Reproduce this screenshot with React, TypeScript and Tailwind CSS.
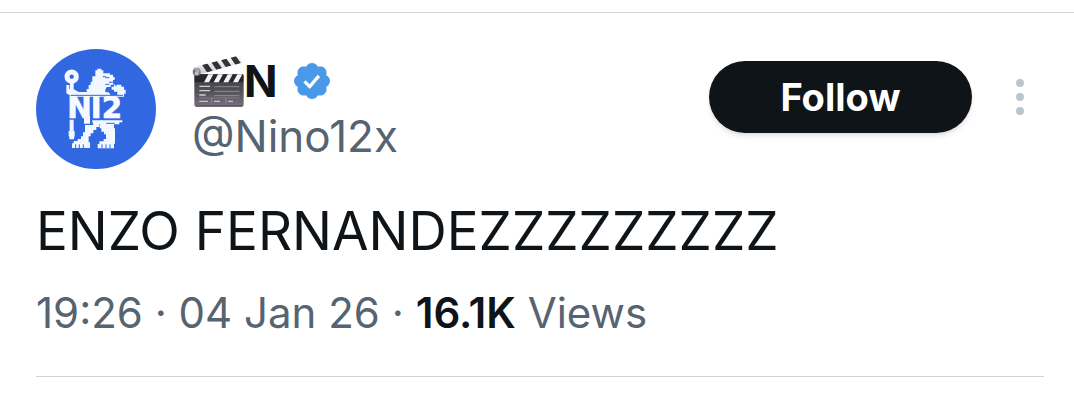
function Avatar() {
  return (
    <svg viewBox="18 18 360 360" className="size-full" role="img" aria-label="N avatar">
      <rect x="18" y="18" width="360" height="360" fill="#3168e2" />
      {/* staff */}
      <circle cx="125" cy="101" r="14" fill="none" stroke="#f2f8ff" strokeWidth="15" />
      <path d="M120 118h11v30h-11zM119 230h12v34h3v16l-2 4v5h-14v-7l-2-4v-14h3z" fill="#f2f8ff" />
      {/* head, mane and raised paws */}
      <path
        d="M109 126h9v12h12l16 9h24v-9h6v-12h6v-10h5v-16h9v-18h6v-5h12v5h6v9h20v4h9v7h5v9h-5v5h-12v3h14v6h-9v7h-12l-4 8v8h10l6 8h20v-10h-10v-6h-7v-9h7v-6h22v6h8v9h5v12h-5v9H126l-17-10z"
        fill="#f2f8ff"
      />
      <path d="M218 101h9v3h11M226 124h12M232 136l12 13M250 122h8v8" fill="none" stroke="#3168e2" strokeWidth="3" />
      {/* body, legs and tail */}
      <path
        d="M186 232h30v11h-8v9h-9v9h-9v10h-8v9h-6v18h4v17h-54v-14h5v-7h12v-6h10v-8h6v-12h6v-22h25z"
        fill="#f2f8ff"
      />
      <path
        d="M212 232h65v6h-9v6h-16v12h3v46h-3v14h-49v-13h5v-8h13v-7h7v-14h-6v-8h-8v-10h-5v-12h3z"
        fill="#f2f8ff"
      />
      <path d="M137 304v11M148 304v11M160 304v11M216 304v11M228 304v11M240 304v11" stroke="#3168e2" strokeWidth="3" />
      <path d="M229 241h25" stroke="#3168e2" strokeWidth="3" />
      {/* letters across the chest */}
      <text
        x="112 182 215"
        y="226"
        fill="#f7fbff"
        stroke="#f7fbff"
        strokeWidth="2"
        fontSize="88"
        fontWeight="700"
        fontFamily="DejaVu Sans, sans-serif"
      >
        NI2
      </text>
      <path d="M162 220h18v22h-18z" fill="#f7fbff" />
      <path d="M122 157h157" fill="none" stroke="#3168e2" strokeWidth="3" />
    </svg>
  );
}

function Clapper() {
  return (
    <svg viewBox="24 20 154 156" className="size-13 shrink-0" role="img" aria-label="Clapper board">
      <defs>
        <linearGradient id="slate" x1="0" y1="0" x2="0" y2="1">
          <stop offset="0" stopColor="#3c3b40" />
          <stop offset="0.55" stopColor="#55535a" />
          <stop offset="1" stopColor="#77717e" />
        </linearGradient>
        <linearGradient id="stick" x1="0" y1="0" x2="0" y2="1">
          <stop offset="0" stopColor="#ffffff" />
          <stop offset="1" stopColor="#c9c9ce" />
        </linearGradient>
        <clipPath id="upper">
          <path d="M27 57L168 21l6 22L34 82z" />
        </clipPath>
      </defs>
      <rect x="30" y="78" width="148" height="97" rx="6" fill="url(#slate)" />
      <g clipPath="url(#upper)">
        <path d="M27 57L168 21l6 22L34 82z" fill="url(#stick)" />
        <path
          d="M52 48l16 24 17-4-17-24zM80 40l16 24 17-4-17-24zM108 32l16 24 17-4-17-24zM137 25l16 24 17-4-17-24z"
          fill="#343238"
        />
      </g>
      <path d="M31 78h146v24H31z" fill="#28272b" />
      <path
        d="M72 78h15l-13 24H59zM101 78h15l-13 24H88zM130 78h15l-13 24h-15zM159 78h15l-13 24h-15z"
        fill="#f3f3f5"
      />
      <circle cx="37" cy="71" r="12" fill="#77747b" />
      <path d="M30 63l5-4 9 3 3 7-5 5z" fill="#aaa7ae" />
      <circle cx="37" cy="75" r="6" fill="#bebcc2" />
      <g stroke="#aaa8b0" fill="none">
        <path d="M90 115h75M90 129h75M90 142h75" strokeWidth="2" />
        <path d="M45 114h32M45 127h32M45 140h19" stroke="#d0ced4" strokeWidth="4" />
        <path d="M44 149h122" strokeWidth="2" stroke="#8b8893" />
        <path d="M45 159h26M89 159h18M132 159h14" stroke="#c5c1cb" strokeWidth="4" />
        <path d="M82 150v14M125 150v14" strokeWidth="2" />
      </g>
      <path d="M34 173h140" stroke="#4a454f" strokeWidth="3" />
    </svg>
  );
}

function VerifiedBadge() {
  return (
    <svg viewBox="1.6 1.6 18.8 18.8" className="size-9 shrink-0" role="img" aria-label="Verified account">
      <path
        fill="#4a99e9"
        d="M20.396 11c-.018-.646-.215-1.275-.57-1.816-.354-.54-.852-.972-1.438-1.246.223-.607.27-1.264.14-1.897-.131-.634-.437-1.218-.882-1.687-.47-.445-1.053-.75-1.687-.882-.633-.13-1.29-.083-1.897.14-.273-.587-.704-1.086-1.245-1.44S11.647 1.62 11 1.604c-.646.017-1.273.213-1.813.568s-.969.854-1.24 1.44c-.608-.223-1.267-.272-1.902-.14-.635.13-1.22.436-1.69.882-.445.47-.749 1.055-.878 1.688-.13.633-.08 1.29.144 1.896-.587.274-1.087.705-1.443 1.245-.356.54-.555 1.17-.574 1.817.02.647.218 1.276.574 1.817.356.54.856.972 1.443 1.245-.224.606-.274 1.263-.144 1.896.13.634.433 1.218.877 1.688.47.443 1.054.747 1.687.878.633.132 1.29.084 1.897-.136.274.586.705 1.084 1.246 1.439.54.354 1.17.551 1.816.569.647-.016 1.276-.213 1.817-.567s.972-.854 1.245-1.44c.604.239 1.266.296 1.903.164.636-.132 1.22-.447 1.68-.907.46-.46.776-1.044.908-1.681s.075-1.299-.165-1.903c.586-.274 1.084-.705 1.439-1.246.354-.54.551-1.17.569-1.816z"
      />
      <path d="M7.1 11.2l2.7 2.7 4.8-5.6" fill="none" stroke="#fff" strokeWidth="1.7" />
    </svg>
  );
}

export default function App() {
  return (
    <main className="min-h-screen bg-white font-['Inter',sans-serif] text-[#0f1419]">
      <article className="mt-3 border-t border-[#d2d5d7] pt-9 pr-[30px] pl-9">
        <header className="flex items-start gap-9">
          <a href="#profile" className="size-30 shrink-0 overflow-hidden rounded-full">
            <Avatar />
          </a>

          <div className="min-w-0 flex-1 pt-2">
            <div className="flex h-12 items-center">
              <Clapper />
              <span className="text-[44px] leading-none font-bold">N</span>
              <span className="ml-4">
                <VerifiedBadge />
              </span>
            </div>
            <a href="#profile" className="block text-[44px] leading-[62px] text-[#566370]">
              @Nino12x
            </a>
          </div>

          <div className="flex items-center gap-8 pt-3 pr-2">
            <button
              type="button"
              className="h-18 w-[263px] rounded-full bg-[#0f1419] text-[38px] leading-none font-bold text-white shadow-md"
            >
              Follow
            </button>
            <button type="button" aria-label="More" className="flex w-8 flex-col items-center gap-1.5">
              <span className="size-2 rounded-full bg-[#bac6ce]" />
              <span className="size-2 rounded-full bg-[#bac6ce]" />
              <span className="size-2 rounded-full bg-[#bac6ce]" />
            </button>
          </div>
        </header>

        <p className="mt-7 text-[53px] leading-[68px]">ENZO FERNANDEZZZZZZZZZ</p>

        <p className="mt-4 border-b border-[#d2d5d7] pb-[31px] text-[42px] leading-[64px] text-[#566370]">
          <time>19:26 · 04 Jan 26</time> · <strong className="font-semibold text-[#0f1419]">16.1K</strong> Views
        </p>
      </article>
    </main>
  );
}
